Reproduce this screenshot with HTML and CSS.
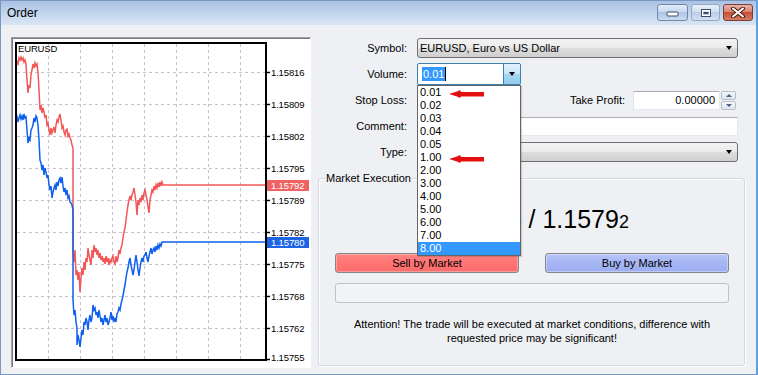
FILE: index.html
```html
<!DOCTYPE html>
<html>
<head>
<meta charset="utf-8">
<title>Order</title>
<link rel="stylesheet" href="styles.css">
</head>
<body>
<div class="window">
  <div class="titlebar">
    <span class="title">Order</span>
    <div class="caption-btns">
      <div class="cbtn cmin"><svg width="13" height="6" viewBox="0 0 13 6"><rect x="1" y="1" width="11" height="4" rx="1" fill="#fff" stroke="#3c4d66" stroke-width="1"/></svg></div>
      <div class="cbtn cmax"><svg width="12" height="10" viewBox="0 0 12 10"><rect x="1.5" y="1.5" width="9" height="7" fill="none" stroke="#3c4d66" stroke-width="1"/><rect x="2.5" y="2.5" width="7" height="5" fill="none" stroke="#fff" stroke-width="1"/><rect x="3.5" y="4" width="5" height="2" fill="#3c4d66"/></svg></div>
      <div class="cbtn cclose"><svg width="14" height="11" viewBox="0 0 14 11"><path d="M2 1.5 L12 9.5 M12 1.5 L2 9.5" stroke="#4a1e16" stroke-width="4" stroke-linecap="round"/><path d="M2 1.5 L12 9.5 M12 1.5 L2 9.5" stroke="#fff" stroke-width="2" stroke-linecap="round"/></svg></div>
    </div>
  </div>
  <div class="client">
    <div class="chart-box">
      <svg class="chart" width="298" height="329" viewBox="12 38 298 329">
        <g class="grid" stroke="#cdbdcd" stroke-width="1" stroke-dasharray="3 3" fill="none">
          <line x1="48.5" y1="44" x2="48.5" y2="359"/>
          <line x1="80.5" y1="44" x2="80.5" y2="359"/>
          <line x1="112.5" y1="44" x2="112.5" y2="359"/>
          <line x1="144.5" y1="44" x2="144.5" y2="359"/>
          <line x1="176.5" y1="44" x2="176.5" y2="359"/>
          <line x1="208.5" y1="44" x2="208.5" y2="359"/>
          <line x1="240.5" y1="44" x2="240.5" y2="359"/>
          <line x1="17" y1="72.5" x2="265" y2="72.5"/>
          <line x1="17" y1="104.5" x2="265" y2="104.5"/>
          <line x1="17" y1="136.5" x2="265" y2="136.5"/>
          <line x1="17" y1="168.5" x2="265" y2="168.5"/>
          <line x1="17" y1="200.5" x2="265" y2="200.5"/>
          <line x1="17" y1="232.5" x2="265" y2="232.5"/>
          <line x1="17" y1="264.5" x2="265" y2="264.5"/>
          <line x1="17" y1="296.5" x2="265" y2="296.5"/>
          <line x1="17" y1="328.5" x2="265" y2="328.5"/>
        </g>
        <polyline fill="none" stroke="#f25858" stroke-width="1.5" stroke-linejoin="miter" points="16,67 17,62 18,64 19,58 20,60 21,57 22,60 23,58 24,62 25,60 26,64 27,80 28,93 29,85 30,88 31,75 32,70 33,64 34,68 35,63 36,66 37,64 38,72 39,90 40,110 41,105 42,113 43,108 44,112 45,118 46,115 47,125 48,123 49,130 50,135 51,128 52,133 53,130 54,127 55,133 56,125 57,120 58,122 59,117 60,114 61,120 62,128 63,126 64,132 65,135 66,130 67,129 68,136 69,134 70,138 71,140 72,145 73,148 73,250 74,262 75,250 76,275 77,270 78,280 79,272 80,292 81,278 82,268 83,275 84,262 85,270 86,258 87,262 88,248 89,255 90,260 91,265 92,250 93,258 94,245 95,252 96,248 97,255 98,250 99,258 100,253 101,260 102,256 103,262 104,258 105,264 106,256 107,262 108,258 109,265 110,260 111,262 112,258 113,256 114,262 115,264 116,256 117,262 118,258 119,250 120,254 121,248 122,245 123,238 124,232 125,228 126,220 127,212 128,205 129,200 130,196 131,200 132,195 133,192 134,188 135,195 136,202 137,215 138,200 139,205 140,198 141,202 142,195 143,200 144,193 145,190 146,195 147,200 148,207 149,213 150,200 151,195 152,190 153,192 154,186 155,190 156,185 157,188 158,183 159,187 160,182 161,186 162,182 163,185 266,185"/>
        <polyline fill="none" stroke="#1060f0" stroke-width="1.5" stroke-linejoin="miter" points="16,120 17,117 18,122 19,118 20,115 21,119 22,116 23,120 24,114 25,118 26,117 27,130 28,143 29,138 30,140 31,130 32,128 33,125 34,118 35,122 36,116 37,118 38,125 39,140 40,160 41,163 42,170 43,165 44,175 45,168 46,172 47,178 48,175 49,185 50,190 51,186 52,198 53,192 54,188 55,185 56,190 57,182 58,186 59,180 60,178 61,183 62,177 63,186 64,192 65,188 66,195 67,190 68,198 69,196 70,202 71,203 72,205 73,210 73,300 74,315 75,310 76,322 77,328 77,345 78,335 79,340 80,347 81,338 82,330 83,335 84,322 85,325 86,318 87,322 88,330 89,320 90,315 91,322 92,318 93,305 94,310 95,308 96,315 97,312 98,318 99,310 100,316 101,322 102,318 103,325 104,320 105,315 106,322 107,318 108,325 109,322 110,318 111,312 112,320 113,316 114,322 115,318 116,322 117,314 118,312 119,308 120,310 121,304 122,300 123,296 124,290 125,285 126,278 127,272 128,268 129,262 130,258 131,265 132,270 133,275 134,270 135,262 136,255 137,262 138,270 139,276 140,268 141,262 142,258 143,262 144,256 145,255 146,252 147,258 148,262 149,256 150,252 151,248 152,254 153,250 154,248 155,252 156,246 157,250 158,245 159,248 160,244 161,246 162,242 163,242 266,242"/>
        <rect x="16" y="43" width="250" height="317" fill="none" stroke="#000" stroke-width="2"/>
        <g stroke="#000" stroke-width="1.5">
          <line x1="266" y1="72.5" x2="270" y2="72.5"/>
          <line x1="266" y1="104.5" x2="270" y2="104.5"/>
          <line x1="266" y1="136.5" x2="270" y2="136.5"/>
          <line x1="266" y1="168.5" x2="270" y2="168.5"/>
          <line x1="266" y1="200.5" x2="270" y2="200.5"/>
          <line x1="266" y1="232.5" x2="270" y2="232.5"/>
          <line x1="266" y1="264.5" x2="270" y2="264.5"/>
          <line x1="266" y1="296.5" x2="270" y2="296.5"/>
          <line x1="266" y1="328.5" x2="270" y2="328.5"/>
          <line x1="266" y1="359.5" x2="270" y2="359.5"/>
        </g>
        <g class="axis-text">
          <text x="18" y="52">EURUSD</text>
          <text x="271" y="76">1.15816</text>
          <text x="271" y="108">1.15809</text>
          <text x="271" y="140">1.15802</text>
          <text x="271" y="172">1.15795</text>
          <text x="271" y="204">1.15789</text>
          <text x="271" y="236">1.15782</text>
          <text x="271" y="268">1.15775</text>
          <text x="271" y="300">1.15768</text>
          <text x="271" y="332">1.15762</text>
          <text x="271" y="361">1.15755</text>
        </g>
        <rect x="267" y="180" width="42" height="11" fill="#f06262"/>
        <rect x="267" y="237" width="42" height="11" fill="#1c64e4"/>
        <g class="axis-text tag">
          <text x="271" y="189">1.15792</text>
          <text x="271" y="246">1.15780</text>
        </g>
      </svg>
    </div>

    <div class="panel">
      <div class="form">
        <label class="lbl">Symbol:</label>
        <div class="combo"><span class="ctext">EURUSD, Euro vs US Dollar</span><span class="arrow"></span></div>

        <label class="lbl">Volume:</label>
        <div class="combo vol">
          <span class="vtext"><span class="sel">0.01</span><span class="caret"></span></span>
          <span class="vbtn"><span class="arrow"></span></span>
          <div class="dropdown">
            <div class="item">0.01</div>
            <div class="item">0.02</div>
            <div class="item">0.03</div>
            <div class="item">0.04</div>
            <div class="item">0.05</div>
            <div class="item">1.00</div>
            <div class="item">2.00</div>
            <div class="item">3.00</div>
            <div class="item">4.00</div>
            <div class="item">5.00</div>
            <div class="item">6.00</div>
            <div class="item">7.00</div>
            <div class="item hl">8.00</div>
            <svg class="marker m1" width="38" height="10" viewBox="0 0 38 10"><polygon points="1,5 9,2.5 12,1 13,3 36,3 36,7.5 13,7.5 12,9 9,7.5" fill="#e41010"/></svg>
            <svg class="marker m2" width="38" height="10" viewBox="0 0 38 10"><polygon points="1,5 9,2.5 12,1 13,3 36,3 36,7.5 13,7.5 12,9 9,7.5" fill="#e41010"/></svg>
          </div>
        </div>

        <label class="lbl">Stop Loss:</label>
        <div class="sl-row">
          <div class="input sl"></div>
          <span class="tp-label">Take Profit:</span>
          <div class="input tp">0.00000</div>
          <div class="spin">
            <span class="sp up"><span class="tri-up"></span></span>
            <span class="sp down"><span class="tri-down"></span></span>
          </div>
        </div>

        <label class="lbl">Comment:</label>
        <div class="input comment"></div>

        <label class="lbl">Type:</label>
        <div class="combo"><span class="ctext"></span><span class="arrow"></span></div>
      </div>

      <div class="group">
        <span class="legend">Market Execution</span>
        <div class="price">1.1578<span class="small">0</span> / 1.1579<span class="small">2</span></div>
        <div class="buttons">
          <div class="btn sell">Sell by Market</div>
          <div class="btn buy">Buy by Market</div>
        </div>
        <div class="progress"></div>
        <p class="note">Attention! The trade will be executed at market conditions, difference with<br>requested price may be significant!</p>
      </div>
    </div>
  </div>
</div>
</body>
</html>
```

FILE: styles.css
```css
* { box-sizing: border-box; }
html, body { margin: 0; padding: 0; }
body {
  width: 758px;
  height: 375px;
  overflow: hidden;
  font-family: "Liberation Sans", Arial, sans-serif;
  font-size: 11px;
  color: #000;
  background: #eef0f4;
}
.window {
  width: 758px;
  height: 375px;
  border: 1px solid #7b97bd;
  border-right: 2px solid #5aa2e2;
  background: #eef0f4;
  display: flex;
  flex-direction: column;
}
.titlebar {
  height: 24px;
  flex: none;
  display: flex;
  align-items: flex-start;
  padding-left: 6px;
  background: linear-gradient(#a9c2e4, #c6d9ee 60%, #d9e5f3);
}
.title {
  font-size: 12px;
  line-height: 24px;
  color: #000;
}
.caption-btns {
  margin-left: auto;
  margin-right: 3px;
  margin-top: 3px;
  display: flex;
  gap: 3px;
}
.cbtn {
  height: 17px;
  border-radius: 3px;
  display: flex;
  align-items: center;
  justify-content: center;
}
.cmin {
  width: 31px;
  border: 1px solid #7088a8;
  background: linear-gradient(#e4edf8, #c4d6ee 50%, #adc4e4 50%, #cbdcf1);
}
.cmin svg { margin-top: 3px; }
.cmax {
  width: 29px;
  border: 1px solid #93a8c4;
  background: linear-gradient(#e8eff9, #cfdcef 50%, #bccde8 50%, #d3e0f2);
}
.cclose {
  width: 30px;
  border: 1px solid #7a3e34;
  background: linear-gradient(#eab2a6, #d9806c 50%, #c64f38 50%, #d77c63);
}

.client {
  flex: 1;
  display: flex;
  align-items: flex-start;
  padding: 12px 0 0 10px;
}
.chart-box {
  flex: none;
  width: 300px;
  height: 331px;
  border: 1px solid;
  border-color: #a0a0a0 #ffffff #ffffff #a0a0a0;
  background: #fff;
  box-shadow: inset 1px 1px 0 #7a7a7a;
}
.chart { display: block; }
.axis-text text {
  font-family: "Liberation Sans", Arial, sans-serif;
  font-size: 9.5px;
  letter-spacing: -0.15px;
  fill: #000;
}
.axis-text.tag text { fill: #fff; }

.panel {
  flex: none;
  width: 427px;
  margin-left: 7px;
  margin-top: 1px;
}
.form {
  display: grid;
  grid-template-columns: 89px 321px;
  column-gap: 10px;
  grid-auto-rows: 20px;
  row-gap: 6px;
  align-items: center;
}
.lbl {
  text-align: right;
  line-height: 14px;
}
.combo {
  position: relative;
  height: 20px;
  border: 1px solid #707070;
  border-radius: 3px;
  background: linear-gradient(#f3f3f3, #ebebeb 48%, #dddddd 52%, #cfcfcf);
  display: flex;
  align-items: center;
  padding-left: 2px;
}
.ctext { flex: 1; line-height: 14px; }
.arrow {
  width: 0;
  height: 0;
  border-left: 3.5px solid transparent;
  border-right: 3.5px solid transparent;
  border-top: 4px solid #000;
  margin-right: 5px;
}
.combo.vol {
  width: 104px;
  height: 22px;
  border-color: #3c7fb1;
  border-radius: 2px;
  background: #fff;
  padding-left: 0;
  align-items: stretch;
}
.vtext {
  flex: 1;
  display: flex;
  align-items: center;
  padding-left: 4px;
}
.sel {
  background: #3399ff;
  color: #fff;
  line-height: 14px;
  padding: 0 1px;
}
.caret {
  width: 1px;
  height: 14px;
  background: #000;
}
.vbtn {
  width: 17px;
  display: flex;
  align-items: center;
  justify-content: center;
  border-left: 1px solid #3c7fb1;
  background: linear-gradient(#e3f2fc, #c6e4f7 50%, #a9d6f2 50%, #92cbee);
}
.vbtn .arrow { margin-right: 0; }

.dropdown {
  position: absolute;
  left: -1px;
  top: calc(100% + 1px);
  width: 104px;
  border: 1px solid #646464;
  background: #fff;
  z-index: 10;
  box-shadow: 1px 1px 1px rgba(0,0,0,0.15);
}
.item {
  height: 13px;
  line-height: 13px;
  padding-left: 2px;
  font-size: 11px;
}
.item.hl {
  background: #3399ff;
  color: #fff;
}
.marker {
  position: absolute;
  left: 30px;
}
.marker.m1 { top: 3px; }
.marker.m2 { top: 68px; }

.sl-row {
  display: flex;
  align-items: center;
  height: 20px;
}
.input {
  height: 20px;
  background: #fff;
  border: 1px solid;
  border-color: #abadb3 #e3e9ef #e3e9ef #e2e3ea;
  border-radius: 1px;
}
.input.sl { width: 87px; }
.tp-label {
  margin-left: auto;
  margin-right: 8px;
  line-height: 14px;
}
.input.tp {
  width: 87px;
  height: 19px;
  text-align: right;
  padding-right: 4px;
  line-height: 17px;
}
.spin {
  width: 15px;
  height: 19px;
  margin-left: 1px;
  margin-right: 2px;
  display: flex;
  flex-direction: column;
  gap: 1px;
}
.sp {
  flex: 1;
  display: flex;
  align-items: center;
  justify-content: center;
  border: 1px solid #b5bfcc;
  border-radius: 2px;
  background: linear-gradient(#f4f7fb, #dde5ef);
}
.tri-up {
  width: 0; height: 0;
  border-left: 3px solid transparent;
  border-right: 3px solid transparent;
  border-bottom: 3px solid #4d6185;
}
.tri-down {
  width: 0; height: 0;
  border-left: 3px solid transparent;
  border-right: 3px solid transparent;
  border-top: 3px solid #4d6185;
}
.input.comment { width: 321px; height: 19px; }

.group {
  position: relative;
  margin-top: 16px;
  height: 188px;
  border: 1px solid #d0d7df;
  border-radius: 3px;
  box-shadow: inset 1px 1px 0 #fff, 1px 1px 0 #fff;
  padding: 0 15px 0 16px;
}
.legend {
  position: absolute;
  top: -8px;
  left: 6px;
  padding: 0 1px;
  line-height: 14px;
  background: #eef0f4;
}
.price {
  margin-top: 25px;
  height: 30px;
  line-height: 30px;
  font-size: 25px;
  text-align: center;
  white-space: nowrap;
}
.price .small { font-size: 18px; }
.buttons {
  display: flex;
  gap: 26px;
  margin-top: 19px;
}
.btn {
  flex: 1;
  height: 20px;
  line-height: 18px;
  text-align: center;
  border: 1px solid #868686;
  border-radius: 3px;
}
.btn.sell {
  background: linear-gradient(#ff8585, #ff7474 50%, #fa6c6c);
  box-shadow: inset 0 0 0 1px rgba(255,255,255,0.3);
}
.btn.buy {
  background: linear-gradient(#b7c4f8, #a6b6f5 50%, #9cadf1);
  box-shadow: inset 0 0 0 1px rgba(255,255,255,0.35);
}
.progress {
  margin-top: 10px;
  height: 20px;
  border: 1px solid #c2c2c2;
  border-radius: 3px;
  background: #f3f4f6;
}
.note {
  margin: 14px 0 0;
  line-height: 14px;
  text-align: center;
}
```
